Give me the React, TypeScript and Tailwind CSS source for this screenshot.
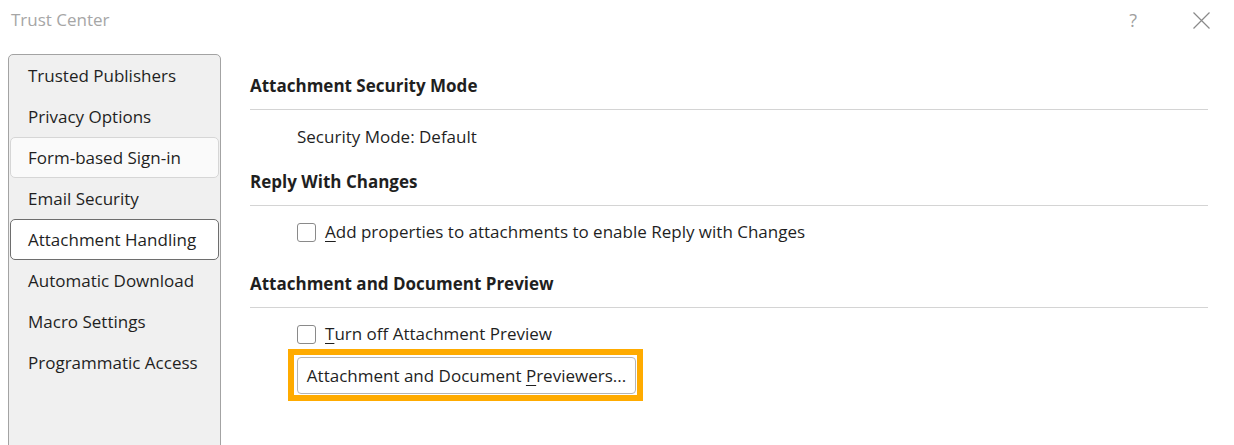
import React from "react";

const FONT = { fontFamily: '"Open Sans", "Noto Sans", sans-serif' };

const items = [
  { label: "Trusted Publishers", state: "none" },
  { label: "Privacy Options", state: "none" },
  { label: "Form-based Sign-in", state: "hover" },
  { label: "Email Security", state: "none" },
  { label: "Attachment Handling", state: "selected" },
  { label: "Automatic Download", state: "none" },
  { label: "Macro Settings", state: "none" },
  { label: "Programmatic Access", state: "none" },
];

function Checkbox() {
  return (
    <span className="inline-block w-[19px] h-[19px] rounded-[3px] border-[1.5px] border-[#8a8a8a] bg-white shrink-0" />
  );
}

function Heading({ children }: { children: React.ReactNode }) {
  return (
    <div>
      <div className="h-6 leading-6 text-[17px] font-bold text-[#1f1f1f]">{children}</div>
      <div className="mt-[11px] h-px bg-[#d4d4d4]" />
    </div>
  );
}

export default function App() {
  return (
    <div className="w-[1234px] h-[445px] bg-white overflow-hidden text-[#1f1f1f]" style={FONT}>
      <div className="h-[40px] flex items-center justify-between pl-[11px] pr-[24px]">
        <div className="text-[17px] text-[#a6a6a6]">Trust Center</div>
        <div className="flex items-center gap-[56px]">
          <span className="text-[18px] text-[#a0a0a0]">?</span>
          <svg width="17" height="17" viewBox="0 0 17 17" className="text-[#8a8a8a]">
            <path d="M0.5 0.5 L16.5 16.5 M16.5 0.5 L0.5 16.5" stroke="currentColor" strokeWidth="1.2" />
          </svg>
        </div>
      </div>
      <div className="flex pt-[14px]">
        <div className="ml-[8px] w-[213px] h-[420px] border border-[#a3a3a3] rounded-t-[5px] bg-[#f0f0f0] px-px shrink-0">
          {items.map((it) => (
            <div
              key={it.label}
              className={
                "h-[41px] flex items-center pl-[17px] text-[17px] rounded-[5px] border " +
                (it.state === "selected"
                  ? "bg-white border-[#6e6e6e]"
                  : it.state === "hover"
                  ? "bg-[#fafafa] border-[#d6d6d6]"
                  : "border-transparent")
              }
            >
              {it.label}
            </div>
          ))}
        </div>
        <div className="flex-1 ml-[29px] mr-[26px] pt-[20px]">
          <Heading>Attachment Security Mode</Heading>
          <div className="mt-[15px] ml-[47px] h-6 leading-6 text-[17px]">Security Mode: Default</div>
          <div className="mt-[21px]">
            <Heading>Reply With Changes</Heading>
          </div>
          <div className="mt-[14px] ml-[47px] h-6 flex items-center gap-[9px] text-[17px]">
            <Checkbox />
            <span>
              <span className="underline underline-offset-[3px]">A</span>dd properties to attachments to enable Reply with Changes
            </span>
          </div>
          <div className="mt-[28px]">
            <Heading>Attachment and Document Preview</Heading>
          </div>
          <div className="mt-[14px] ml-[47px] h-6 flex items-center gap-[9px] text-[17px]">
            <Checkbox />
            <span>
              <span className="underline underline-offset-[3px]">T</span>urn off Attachment Preview
            </span>
          </div>
          <div className="mt-[11px] ml-[47px] flex">
            <div className="relative">
              <button className="h-[37px] w-[339px] rounded-[4px] border border-[#b5b5b5] bg-white text-[17px] text-[#1f1f1f] flex items-center justify-center">
                <span>
                  Attachment and Document <span className="underline underline-offset-[3px]">P</span>reviewers...
                </span>
              </button>
              <span className="pointer-events-none absolute -left-[9px] -top-[8px] -right-[7px] -bottom-[7px] border-[6px] border-[#ffab00]" />
            </div>
          </div>
        </div>
      </div>
    </div>
  );
}
